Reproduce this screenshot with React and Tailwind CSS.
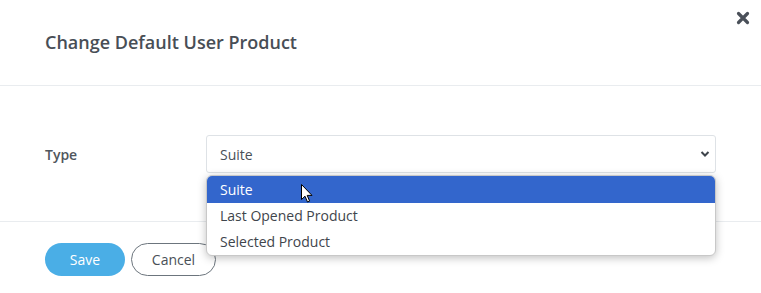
import React from 'react';

const options = ['Suite', 'Last Opened Product', 'Selected Product'];

export default function App() {
  return (
    <div
      className="relative w-[761px] h-[293px] overflow-hidden bg-white text-[#495057]"
      style={{ fontFamily: '"Open Sans", "Liberation Sans", sans-serif' }}
    >
      {/* header */}
      <div className="flex justify-between h-[86px] border-b border-[#e9ecef]">
        <h2 className="pl-[45px] pt-[29px] text-[18px] leading-[26px] font-semibold text-[#484e56]">
          Change Default User Product
        </h2>
        <button className="mr-[11px] mt-[11px] self-start w-[14px] h-[14px] text-[#4a5059]">
          <svg viewBox="0 0 14 14" className="w-[14px] h-[14px]">
            <path d="M2.5 2.5 L11.5 11.5 M11.5 2.5 L2.5 11.5" stroke="currentColor" strokeWidth="3.2" strokeLinecap="round" />
          </svg>
        </button>
      </div>

      {/* body */}
      <div className="flex items-center pt-[49px] pb-[48px] pl-[45px] pr-[45px]">
        <label className="w-[161px] text-[14px] font-semibold text-[#50565d]">Type</label>
        <div className="relative flex-1">
          <div className="flex items-center justify-between h-[38px] pl-[13px] pr-[5px] border border-[#dee2e6] rounded-[3px] text-[14px] text-[#495057]">
            <span>Suite</span>
            <svg viewBox="0 0 10 8" className="w-[10px] h-[8px] text-[#3e444b]">
              <path d="M1.5 2 L5 5.5 L8.5 2" fill="none" stroke="currentColor" strokeWidth="2" />
            </svg>
          </div>
          <div className="absolute left-0 right-0 top-[40px] z-10 rounded-[6px] bg-white overflow-hidden shadow-[0_2px_8px_rgba(0,0,0,0.25)] border border-[#c8c8c8]">
            {options.map((o, i) => (
              <div
                key={o}
                className={
                  i === 0
                    ? 'h-[27px] leading-[27px] px-[13px] text-[14px] bg-[#3366cc] text-white'
                    : 'h-[26px] leading-[26px] px-[13px] text-[14px] text-[#3f454c]'
                }
              >
                {o}
              </div>
            ))}
          </div>
          <svg viewBox="0 0 12 19" className="absolute left-[95px] top-[49px] z-20 w-[12px] h-[19px]">
            <path d="M0.5 0.5 L0.5 15.5 L4 12.2 L6.5 18 L8.6 17.1 L6.2 11.4 L11 11.4 Z" fill="#fff" stroke="#000" strokeWidth="1" strokeLinejoin="round" />
          </svg>
        </div>
      </div>

      {/* footer */}
      <div className="flex gap-[6px] pt-[21px] pl-[45px] border-t border-[#e9ecef]">
        <button className="w-[80px] h-[33px] rounded-full bg-[#4aaee6] text-white text-[14px]">Save</button>
        <button className="w-[85px] h-[33px] rounded-full border border-[#6c757d] text-[14px] text-[#495057]">
          Cancel
        </button>
      </div>
    </div>
  );
}
